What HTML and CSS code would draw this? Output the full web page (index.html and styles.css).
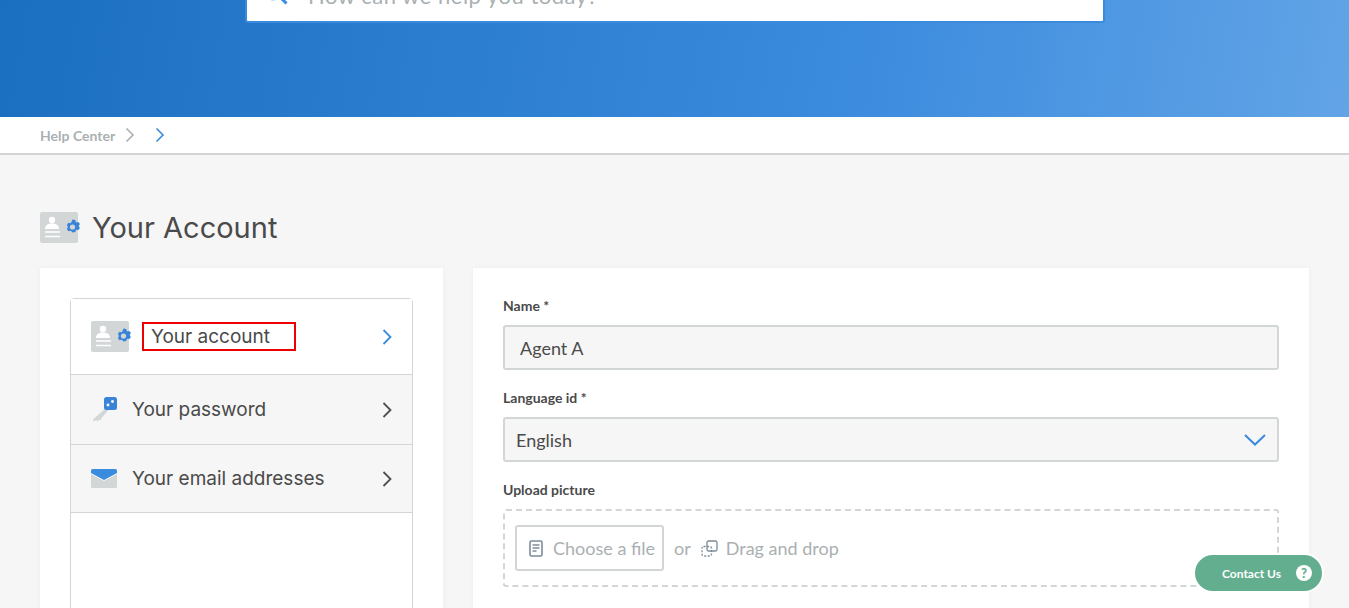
FILE: index.html
```html
<!DOCTYPE html>
<html lang="en">
<head>
    <meta charset="UTF-8">
    <meta name="viewport" content="width=device-width, initial-scale=1.0">
    <title>Your Account</title>
    <link rel="stylesheet" href="styles.css">
</head>
<body>
    <header class="hero">
        <div class="search">
            <svg class="search-icon" width="28" height="28" viewBox="0 0 28 28"><circle cx="12" cy="9" r="9" fill="none" stroke="#3a8ade" stroke-width="2.5"/><path d="M18.5 15.5l7 7" stroke="#3a8ade" stroke-width="3"/></svg>
            <span class="search-text">How can we help you today?</span>
        </div>
    </header>

    <nav class="crumbs">
        <a class="crumb">Help Center</a>
        <svg class="crumb-arrow" width="10" height="16" viewBox="0 0 10 16"><path d="M1.5 1.5L8 8l-6.500 6.500" fill="none" stroke="#aab0b2" stroke-width="1.600"/></svg>
        <svg class="crumb-arrow current" width="10" height="16" viewBox="0 0 10 16"><path d="M1.500 1.500L8 8l-6.500 6.500" fill="none" stroke="#3a8ade" stroke-width="1.600"/></svg>
    </nav>

    <main class="page">
        <h1 class="page-title">
            <svg class="card-icon" width="41" height="31" viewBox="0 0 41 31">
                <rect width="38" height="31" rx="2" fill="#d2d6d7"/>
                <circle cx="12" cy="8" r="3.200" fill="#fff"/>
                <path d="M5 17c0-4 3-5.500 7-5.500s7 1.500 7 5.500z" fill="#fff"/>
                <path d="M5 20h15M5 24.500h15" stroke="#fff" stroke-width="1.500"/>
                <path d="M32.500 7.500l2.800.6.700 2.300 2.400-.4 1.500 2-1.200 2 1.200 2.100-1.500 2-2.400-.4-.7 2.300-2.800.6-1.700-1.800-2.400.4-1.500-2.100 1-2.100-1-2.100 1.500-2.100 2.400.4z" fill="#3a84d8"/>
                <circle cx="32.500" cy="15" r="2.600" fill="#d2d6d7"/>
            </svg>
            Your Account
        </h1>

        <div class="columns">
            <aside class="panel side-panel">
                <ul class="side-menu">
                    <li class="side-item active">
                        <svg class="card-icon" width="41" height="31" viewBox="0 0 41 31">
                            <rect width="38" height="31" rx="2" fill="#d2d6d7"/>
                            <circle cx="12" cy="8" r="3.200" fill="#fff"/>
                            <path d="M5 17c0-4 3-5.500 7-5.500s7 1.500 7 5.500z" fill="#fff"/>
                            <path d="M5 20h15M5 24.500h15" stroke="#fff" stroke-width="1.500"/>
                            <path d="M32.500 7.500l2.800.6.700 2.300 2.400-.4 1.500 2-1.200 2 1.200 2.100-1.500 2-2.400-.4-.7 2.300-2.800.6-1.700-1.800-2.400.4-1.500-2.100 1-2.100-1-2.100 1.500-2.100 2.400.4z" fill="#3a84d8"/>
                            <circle cx="32.500" cy="15" r="2.600" fill="#d2d6d7"/>
                        </svg>
                        <span class="side-label">Your account</span>
                        <svg class="side-arrow" width="10" height="16" viewBox="0 0 10 16"><path d="M1.500 1L8.500 8l-7 7" fill="none" stroke="#3a8ade" stroke-width="1.800"/></svg>
                    </li>
                    <li class="side-item">
                        <svg class="side-icon" width="26" height="26" viewBox="0 0 26 26">
                            <path d="M15 11L2 22.500l1 2 2-1.500 1.500 1.500 1.500-2 1.500 1 1.500-3 6-7z" fill="#d2d6d7"/>
                            <rect x="13" y="0" width="13" height="13" rx="2.500" fill="#3a84d8"/>
                            <circle cx="17" cy="8" r="1.400" fill="#fff"/>
                            <circle cx="21.500" cy="4.500" r="1.400" fill="#fff"/>
                        </svg>
                        <span>Your password</span>
                        <svg class="side-arrow" width="10" height="16" viewBox="0 0 10 16"><path d="M1.500 1L8.500 8l-7 7" fill="none" stroke="#4a4f52" stroke-width="1.800"/></svg>
                    </li>
                    <li class="side-item">
                        <svg class="side-icon" width="26" height="19" viewBox="0 0 26 19">
                            <path d="M0 5l13 7 13-7v12.500a1.500 1.500 0 0 1-1.500 1.500h-23A1.500 1.500 0 0 1 0 17.500z" fill="#d2d6d7"/>
                            <path d="M1.500 0h23A1.500 1.500 0 0 1 26 1.500V4L13 11 0 4V1.500A1.500 1.500 0 0 1 1.500 0z" fill="#3a8ade"/>
                        </svg>
                        <span>Your email addresses</span>
                        <svg class="side-arrow" width="10" height="16" viewBox="0 0 10 16"><path d="M1.500 1L8.500 8l-7 7" fill="none" stroke="#4a4f52" stroke-width="1.800"/></svg>
                    </li>
                </ul>
            </aside>

            <section class="panel form-panel">
                <label class="field-label">Name *</label>
                <div class="field name-field">Agent A</div>

                <label class="field-label">Language id *</label>
                <div class="field select-field">
                    <span>English</span>
                    <svg width="22" height="12" viewBox="0 0 22 12"><path d="M1 1l10 9.500L21 1" fill="none" stroke="#3a8ade" stroke-width="2"/></svg>
                </div>

                <label class="field-label">Upload picture</label>
                <div class="dropzone">
                    <div class="choose-btn">
                        <svg width="14" height="17" viewBox="0 0 14 17"><rect x="1" y="1" width="12" height="15" rx="1.500" fill="none" stroke="#7d8c99" stroke-width="1.600"/><path d="M3.500 5h7M3.500 8h7M3.500 11h4" stroke="#7d8c99" stroke-width="1.300"/></svg>
                        Choose a file
                    </div>
                    <span class="or">or</span>
                    <svg class="drag-icon" width="17" height="17" viewBox="0 0 17 17"><rect x="6" y="1" width="10" height="10" rx="1.500" fill="none" stroke="#7d8c99" stroke-width="1.300"/><rect x="1" y="6.500" width="9.500" height="9.500" rx="1.500" fill="none" stroke="#7d8c99" stroke-width="1.300" stroke-dasharray="2 1.500"/></svg>
                    <span>Drag and drop</span>
                </div>
            </section>
        </div>
    </main>

    <button class="contact">
        Contact Us
        <svg width="16" height="16" viewBox="0 0 16 16"><circle cx="8" cy="8" r="8" fill="#fff"/><text x="8" y="12.500" text-anchor="middle" class="contact-mark">?</text></svg>
    </button>
</body>
</html>
```

FILE: styles.css
```css
* {
    box-sizing: border-box;
}
html, body {
    height: 608px;
    overflow: hidden;
}
body {
    margin: 0;
    background: #f6f6f6;
    font-family: Inter, "Liberation Sans", sans-serif;
    color: #4a4a4a;
}
.hero {
    height: 117px;
    background: linear-gradient(100deg, #1b6fc0 0%, #3a8ade 62%, #62a4e6 100%);
    overflow: hidden;
}
.search {
    width: 860px;
    height: 54px;
    margin: -31px 0 0 245px;
    display: flex;
    align-items: center;
    padding-left: 14px;
    background: #fff;
    border: 2px solid #3a8ade;
    border-top: 0;
    border-radius: 3px;
}
.search-icon {
    margin-right: 19px;
}
.search-text {
    font-family: Lato, sans-serif;
    font-size: 22px;
    letter-spacing: 0.5px;
    color: #aab0b2;
}
.crumbs {
    height: 38px;
    display: flex;
    align-items: center;
    padding-left: 40px;
    background: #fff;
    border-bottom: 2px solid #d2d4d5;
}
.crumb {
    font-family: Lato, sans-serif;
    font-weight: 700;
    font-size: 14px;
    color: #aab0b2;
}
.crumb-arrow {
    margin-left: 10px;
}
.crumb-arrow.current {
    margin-left: 20px;
}
.page {
    padding: 0 40px;
}
.page-title {
    margin: 57px 0 25px;
    height: 31px;
    display: flex;
    align-items: center;
    gap: 11px;
    font-weight: 400;
    font-size: 29px;
    color: #4a4a4a;
}
.columns {
    display: flex;
    gap: 30px;
}
.panel {
    background: #fff;
    padding: 30px;
    height: 400px;
    box-shadow: 0 0 6px rgba(0, 0, 0, 0.04);
}
.side-panel {
    width: 403px;
    flex: none;
}
.form-panel {
    flex: 1;
}
.side-menu {
    margin: 0;
    padding: 0;
    list-style: none;
    height: 340px;
    border: 1px solid #d2d6d7;
    border-radius: 4px;
}
.side-item {
    display: flex;
    align-items: center;
    height: 70px;
    padding: 0 20px;
    background: #f6f6f6;
    border-bottom: 1px solid #d2d6d7;
    font-size: 19px;
}
.side-item.active {
    height: 76px;
    background: #fff;
}
.side-item:nth-child(3) {
    height: 68px;
}
.side-icon {
    margin-right: 15px;
    flex: none;
}
.side-label {
    width: 154px;
    height: 29px;
    margin-left: 10px;
    padding-left: 7px;
    line-height: 25px;
    border: 2px solid #e00;
}
.side-arrow {
    margin-left: auto;
}
.field-label {
    display: block;
    font-family: Lato, sans-serif;
    font-weight: 700;
    font-size: 14px;
    line-height: 18px;
    color: #4a4a4a;
    margin-top: -1px;
}
.field {
    height: 45px;
    margin: 10px 0 20px;
    display: flex;
    align-items: center;
    justify-content: space-between;
    background: #f6f6f6;
    border: 2px solid #d2d6d7;
    border-radius: 3px;
    font-family: Lato, sans-serif;
    font-size: 18px;
}
.name-field {
    padding-left: 15px;
}
.select-field {
    padding: 0 11px;
}
.dropzone {
    height: 78px;
    margin-top: 10px;
    display: flex;
    align-items: center;
    padding-left: 10px;
    border: 2px dashed #d2d6d7;
    border-radius: 3px;
    font-family: Lato, sans-serif;
    font-size: 18px;
    color: #aab0b2;
}
.choose-btn {
    width: 149px;
    height: 46px;
    display: flex;
    align-items: center;
    gap: 10px;
    padding-left: 12px;
    border: 2px solid #d2d6d7;
    border-radius: 3px;
}
.or {
    margin: 0 10px;
}
.drag-icon {
    margin-right: 8px;
}
.contact {
    position: fixed;
    left: 1193px;
    top: 553px;
    width: 131px;
    height: 40px;
    display: flex;
    align-items: center;
    padding: 0 10px 0 27px;
    justify-content: space-between;
    background: #62ae8e;
    border: 2px solid #fff;
    border-radius: 20px;
    font-family: Lato, sans-serif;
    font-weight: 700;
    font-size: 12px;
    color: #fff;
}
.contact-mark {
    font-family: Lato, sans-serif;
    font-weight: 900;
    font-size: 13px;
    fill: #62ae8e;
}
```
